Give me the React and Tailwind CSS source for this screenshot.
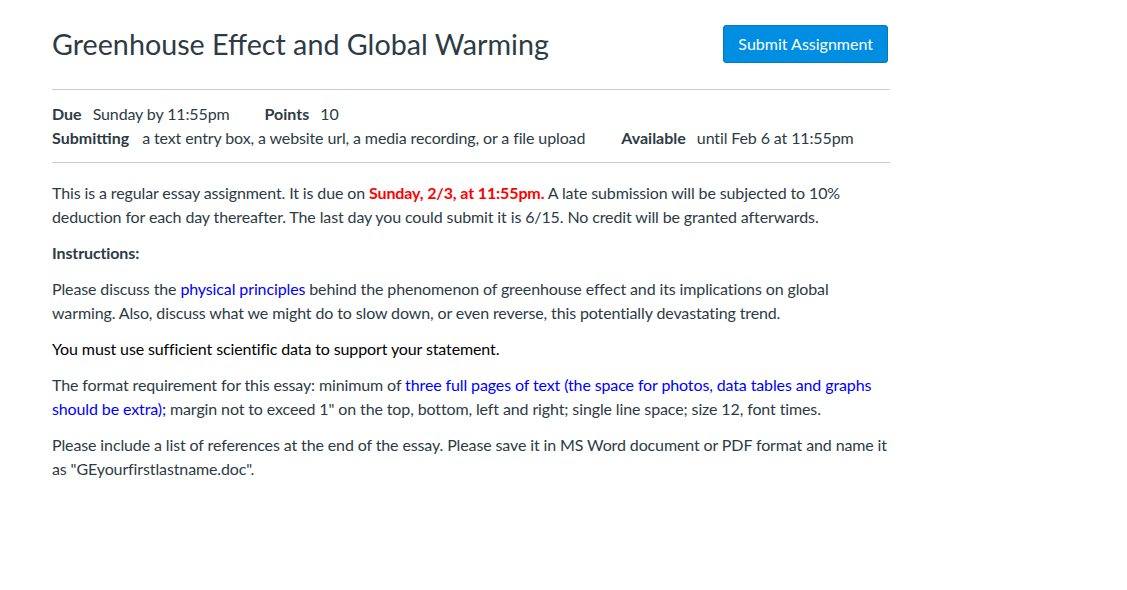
export default function App() {
  const label = "font-bold mr-[11px] tracking-normal";
  return (
    <div className="min-h-[590px] bg-white text-[#2d3b45] font-['Lato',sans-serif] text-base leading-6 tracking-[-0.12px]">
      <div className="w-[838px] ml-[52px] pt-[25px]">
        {/* header: title + action */}
        <div className="flex items-center justify-between">
          <h1 className="text-[28.7px] leading-[38px] font-normal tracking-normal">Greenhouse Effect and Global Warming</h1>
          <button className="mr-[2px] h-[38px] px-[14px] rounded-[3px] border border-[#0079c1] bg-[#008ee2] text-white text-base leading-6 tracking-normal">
            Submit Assignment
          </button>
        </div>

        {/* assignment details */}
        <div className="mt-[26px] border-t border-b border-[#c7cdd1] py-[12px] flex flex-wrap gap-x-[35px]">
          <div><span className={label}>Due</span>Sunday by 11:55pm</div>
          <div><span className={label}>Points</span>10</div>
          <div><span className="font-bold mr-[13px] tracking-normal">Submitting</span>a text entry box, a website url, a media recording, or a file upload</div>
          <div className="ml-px"><span className={label}>Available</span>until Feb 6 at 11:55pm</div>
        </div>

        {/* description */}
        <div className="pt-[18px] flex flex-col gap-[12px]">
          <p>
            This is a regular essay assignment. It is due on{" "}
            <span className="font-bold text-[#ff0000]">Sunday, 2/3, at 11:55pm.</span> A late submission will be subjected to 10% deduction for each day thereafter. The last day you could submit it is 6/15. No credit will be granted afterwards.
          </p>
          <p className="font-bold">Instructions:</p>
          <p>
            Please discuss the <span className="text-[#0000ff]">physical principles</span> behind the phenomenon of greenhouse effect and its implications on global warming. Also, discuss what we might do to slow down, or even reverse, this potentially devastating trend.
          </p>
          <p className="text-black">You must use sufficient scientific data to support your statement.</p>
          <p>
            The format requirement for this essay: minimum of{" "}
            <span className="text-[#0000ff]">three full pages of text (the space for photos, data tables and graphs should be extra);</span> margin not to exceed 1" on the top, bottom, left and right; single line space; size 12, font times.
          </p>
          <p>
            Please include a list of references at the end of the essay. Please save it in MS Word document or PDF format and name it as "GEyourfirstlastname.doc".
          </p>
        </div>
      </div>
    </div>
  );
}
